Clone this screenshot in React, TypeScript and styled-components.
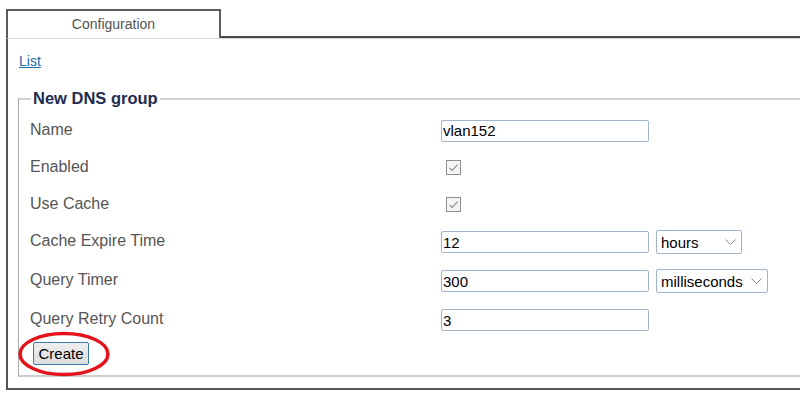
import React from 'react';
import styled, { createGlobalStyle } from 'styled-components';

const GlobalStyle = createGlobalStyle`
  html, body {
    margin: 0;
    padding: 0;
    background: #fff;
    overflow: hidden;
  }

  body {
    font-family: 'Liberation Sans', Arial, sans-serif;
  }
`;

type Row = {
  label: string;
  height: number;
  kind: 'text' | 'check';
  value?: string;
  unit?: { value: string; width: number; options: string[] };
};

const ROWS: Row[] = [
  { label: 'Name', height: 37, kind: 'text', value: 'vlan152' },
  { label: 'Enabled', height: 37, kind: 'check' },
  { label: 'Use Cache', height: 37, kind: 'check' },
  {
    label: 'Cache Expire Time',
    height: 38,
    kind: 'text',
    value: '12',
    unit: { value: 'hours', width: 86, options: ['seconds', 'minutes', 'hours', 'days'] }
  },
  {
    label: 'Query Timer',
    height: 40,
    kind: 'text',
    value: '300',
    unit: { value: 'milliseconds', width: 112, options: ['milliseconds', 'seconds'] }
  },
  { label: 'Query Retry Count', height: 38, kind: 'text', value: '3' }
];

const Chevron = () => (
  <ChevronIcon width="11" height="6" viewBox="0 0 11 6">
    <path d="M0.5 0.5 L5.5 5.5 L10.5 0.5" fill="none" stroke="#8a8a8a" strokeWidth="1" />
  </ChevronIcon>
);

const CheckMark = () => (
  <svg width="13" height="13" viewBox="0 0 13 13">
    <path d="M2.5 6.8 L5.2 9.4 L10.6 3.6" fill="none" stroke="#8c8c8c" strokeWidth="1.1" />
  </svg>
);

const App: React.FC = () => {
  function renderValue(row: Row) {
    if (row.kind === 'check') {
      return (
        <FakeCheck aria-checked="true" role="checkbox">
          <CheckMark />
        </FakeCheck>
      );
    }

    return (
      <>
        <TextInput defaultValue={row.value} />
        {row.unit && (
          <SelectWrap>
            <UnitSelect defaultValue={row.unit.value} width={row.unit.width}>
              {row.unit.options.map((opt) => (
                <option key={opt} value={opt}>
                  {opt}
                </option>
              ))}
            </UnitSelect>
            <Chevron />
          </SelectWrap>
        )}
      </>
    );
  }

  return (
    <Page>
      <GlobalStyle />
      <TabBar>
        <Tab>Configuration</Tab>
        <TabFiller />
      </TabBar>
      <Panel>
        <ListLink href="#">List</ListLink>
        <Group>
          <Legend>New DNS group</Legend>
          <Rows>
            {ROWS.map((row) => (
              <FieldRow key={row.label} height={row.height}>
                <Label>{row.label}</Label>
                <Value>{renderValue(row)}</Value>
              </FieldRow>
            ))}
          </Rows>
          <Actions>
            <CreateButton type="button">Create</CreateButton>
            {/* red marker drawn around the button */}
            <Highlight width="96" height="48" viewBox="0 0 96 48">
              <ellipse cx="48" cy="24" rx="44" ry="20.5" fill="none" stroke="#e3121b" strokeWidth="3.5" />
            </Highlight>
          </Actions>
        </Group>
      </Panel>
    </Page>
  );
};

export default App;

const Page = styled.div`
  padding: 9px 0 0 6px;
  width: 830px;
`;

const TabBar = styled.div`
  display: flex;
  height: 29px;
`;

const Tab = styled.div`
  box-sizing: border-box;
  width: 215px;
  height: 29px;
  border: 2px solid #5c5c5c;
  border-bottom: none;
  display: flex;
  align-items: center;
  justify-content: center;
  padding-bottom: 1px;
  font-size: 14px;
  color: #555;
`;

const TabFiller = styled.div`
  flex: 1;
  border-bottom: 2px solid #4a4a4a;
`;

const Panel = styled.div`
  border-top: 1px solid #d9d9d9;
  border-left: 2px solid #555;
  border-bottom: 2px solid #555;
  padding: 13px 0 11px 10px;
`;

const ListLink = styled.a`
  display: inline-block;
  margin-left: 1px;
  font-size: 14px;
  line-height: 18px;
  color: #1d6aa9;
  text-decoration: underline;
`;

const Group = styled.fieldset`
  margin: 19px 0 0 0;
  padding: 0 0 10px 11px;
  border: 1px solid #aaa;
  border-bottom: 2px solid #cdcdcd;
  border-top: 2px solid #d2d2d2;
`;

const Legend = styled.legend`
  margin-left: 1px;
  padding: 0 2px;
  font-size: 16.5px;
  font-weight: bold;
  color: #1e2c4f;
  line-height: 19px;
`;

const Rows = styled.div`
  display: flex;
  flex-direction: column;
  margin-top: 4px;
`;

const FieldRow = styled.div<{ height: number }>`
  display: grid;
  grid-template-columns: 411px 1fr;
  align-items: center;
  height: ${({ height }) => height}px;
`;

const Label = styled.div`
  font-size: 16px;
  color: #555;
  padding-bottom: 2px;
`;

const Value = styled.div`
  display: flex;
  align-items: center;
  gap: 7px;
`;

const TextInput = styled.input`
  box-sizing: border-box;
  width: 208px;
  height: 22px;
  margin: 0;
  padding: 0 2px 0 1px;
  border: 1px solid #a2b4ca;
  border-radius: 2px;
  font-family: 'Liberation Sans', Arial, sans-serif;
  font-size: 15px;
  color: #000;
  background: #fff;
  outline: none;
`;

const SelectWrap = styled.span`
  position: relative;
  display: inline-flex;
`;

const UnitSelect = styled.select<{ width: number }>`
  box-sizing: border-box;
  appearance: none;
  width: ${({ width }) => width}px;
  height: 24px;
  margin: 0;
  padding: 0 20px 0 4px;
  border: 1px solid #a2b4ca;
  border-radius: 2px;
  background: #fff;
  font-family: 'Liberation Sans', Arial, sans-serif;
  font-size: 15px;
  color: #000;
  outline: none;
`;

const ChevronIcon = styled.svg`
  position: absolute;
  right: 6px;
  top: 9px;
  pointer-events: none;
`;

const FakeCheck = styled.span`
  box-sizing: border-box;
  display: inline-flex;
  align-items: center;
  justify-content: center;
  width: 15px;
  height: 15px;
  margin: 0 0 0 5px;
  border: 1px solid #8e8e8e;
  background: #f4f4f4;
`;

const Actions = styled.div`
  position: relative;
  display: flex;
  margin-top: 3px;
  padding-left: 3px;
`;

const CreateButton = styled.button`
  box-sizing: border-box;
  width: 56px;
  height: 23px;
  margin: 0;
  padding: 0;
  border: 1px solid #3b78b0;
  border-radius: 2px;
  background: linear-gradient(#eeeeee, #dddddd);
  font-family: 'Liberation Sans', Arial, sans-serif;
  font-size: 15px;
  color: #000;
`;

const Highlight = styled.svg`
  position: absolute;
  left: -14px;
  top: -12px;
  pointer-events: none;
`;
